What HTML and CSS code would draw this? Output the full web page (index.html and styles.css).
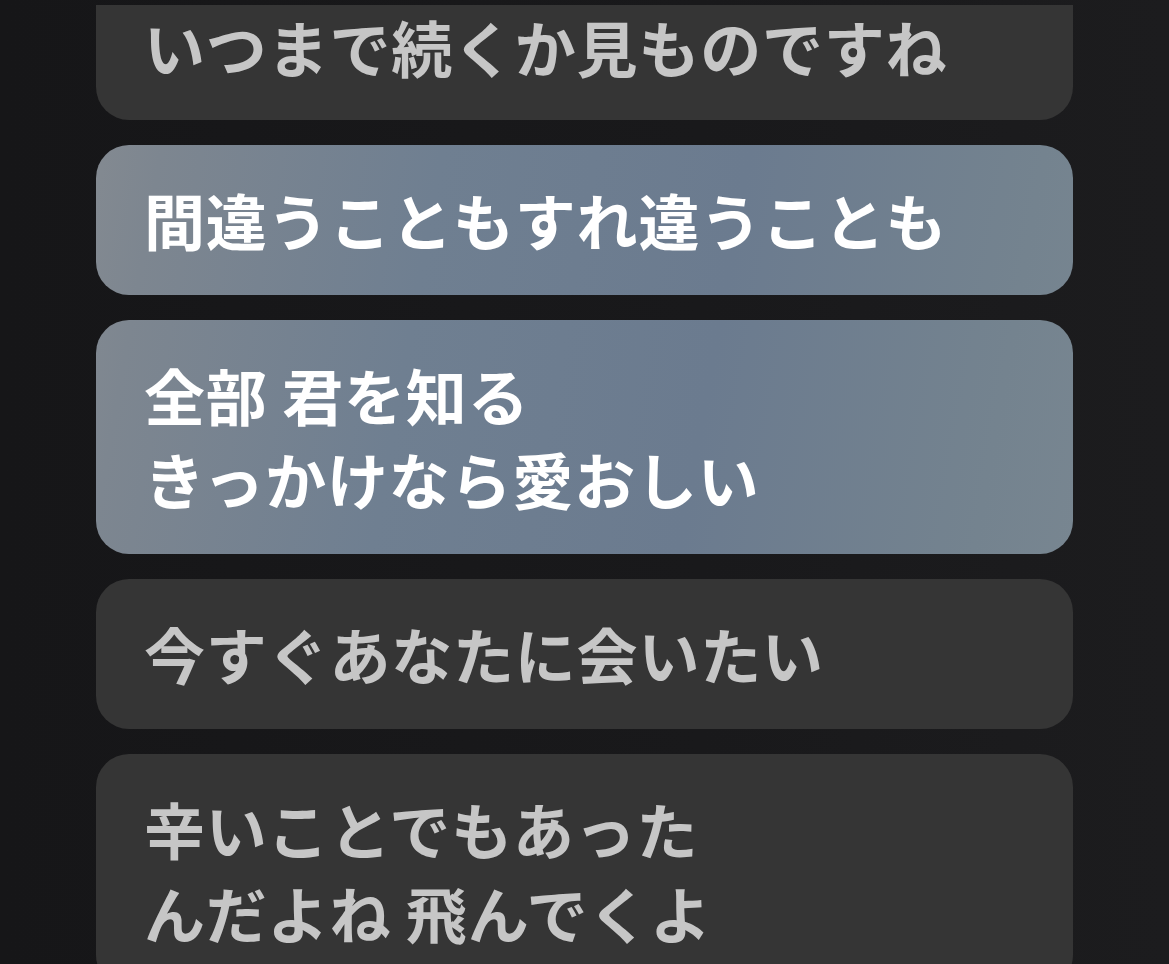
FILE: index.html
```html
<!DOCTYPE html>
<html lang="ja">
<head>
    <meta charset="UTF-8">
    <meta name="viewport" content="width=device-width, initial-scale=1.0">
    <title>歌詞</title>
    <link rel="stylesheet" href="styles.css">
</head>
<body>
    <div class="lyrics">
        <div class="line">いつまで続くか見ものですね</div>
        <div class="line active">間違うこともすれ違うことも</div>
        <div class="line active">全部 君を知る<br>きっかけなら愛おしい</div>
        <div class="line">今すぐあなたに会いたい</div>
        <div class="line">辛いことでもあった<br>んだよね 飛んでくよ</div>
    </div>
</body>
</html>
```

FILE: styles.css
```css
body {
    margin: 0;
    height: 964px;
    overflow: hidden;
    background: linear-gradient(90deg, #161618 0%, #19191b 60%, #1c1c1e 100%);
    font-family: "Noto Sans CJK JP", "Noto Sans", sans-serif;
}
.lyrics {
    padding: 5px 96px 0;
    display: flex;
    flex-direction: column;
    gap: 25px;
}
.line {
    flex-shrink: 0;
    padding: 33px 48px;
    border-radius: 33px;
    background-color: #353535;
    color: #c6c6c6;
    font-size: 61px;
    font-weight: 700;
    letter-spacing: 0.8px;
    line-height: 84px;
    white-space: nowrap;
}
/* top line is scrolled half out of view */
.line:first-child {
    padding-top: 0;
    padding-bottom: 31px;
    border-top-left-radius: 0;
    border-top-right-radius: 0;
}
.line.active {
    color: #fff;
    background: linear-gradient(100deg, #8e9092 0%, #7d8690 14%, #6f7f91 35%, #6b7b8f 58%, #74838f 80%, #7e8a93 100%);
    background-attachment: fixed;
    background-size: 1169px 964px;
}
```
